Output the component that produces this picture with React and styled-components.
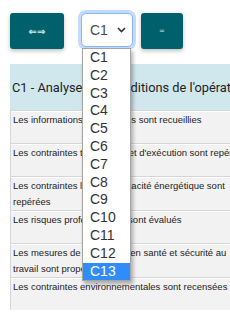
import React from "react";
import styled, { createGlobalStyle } from "styled-components";

const GlobalStyle = createGlobalStyle`
  html, body {
    margin: 0;
    padding: 0;
    background: #fff;
    overflow: hidden;
  }
  body {
    font-family: "Liberation Sans", Arial, sans-serif;
  }
`;

const Page = styled.div`
  position: relative;
  padding: 13px 0 0 10px;
  width: 400px;
`;

const Toolbar = styled.div`
  display: flex;
  align-items: flex-start;
  margin-bottom: 15px;
`;

const ToolButton = styled.button`
  width: ${(p) => p.$w}px;
  height: 36px;
  margin-right: ${(p) => p.$mr || 0}px;
  border: 0;
  border-radius: 3px;
  background: #00606c;
  color: ${(p) => p.$color || "#d4ecf0"};
  font-family: "DejaVu Sans", sans-serif;
  font-size: ${(p) => p.$fs}px;
  font-weight: bold;
  box-shadow: 0 2px 4px rgba(0, 0, 0, 0.25);
  display: flex;
  align-items: center;
  justify-content: center;
  padding: 0;
`;

const SelectWrap = styled.div`
  position: relative;
  margin-right: 8px;
`;

const SelectBox = styled.div`
  height: 32px;
  width: 36px;
  border: 1px solid #86b7fe;
  border-radius: 5px;
  box-shadow: 0 0 0 3px #c2dbfe;
  display: flex;
  align-items: center;
  justify-content: space-between;
  padding: 0 6px 0 8px;
  box-sizing: content-box;
  color: #4a4a4a;
  font-family: "Liberation Sans", Arial, sans-serif;
  font-size: 14px;
  background: #fff;
`;

const Popup = styled.ul`
  position: absolute;
  left: 1px;
  top: 35px;
  width: 47px;
  margin: 0;
  padding: 0;
  list-style: none;
  background: #fff;
  border: 1px solid #a5a5a5;
  box-shadow: 2px 3px 4px rgba(0, 0, 0, 0.3);
  z-index: 10;
`;

const Option = styled.li`
  height: 17.8px;
  line-height: 17.8px;
  padding-left: 7px;
  font-family: "Liberation Sans", Arial, sans-serif;
  font-size: 14px;
  color: ${(p) => (p.$active ? "#fff" : "#333")};
  background: ${(p) => (p.$active ? "#2f8cf8" : "transparent")};
`;

const Table = styled.table`
  border-collapse: separate;
  border-spacing: 0;
  width: 244px;
`;

const HeadCell = styled.th`
  height: 46px;
  padding: 0 2px;
  background: #d1e7ee;
  text-align: left;
  vertical-align: middle;
  font-family: Roboto, "Liberation Sans", sans-serif;
  font-weight: normal;
  font-size: 12.8px;
  color: #222;
  white-space: nowrap;
`;

const Cell = styled.td`
  height: 33px;
  padding: 1px 2px 0;
  background: #f2f2f2;
  border-left: 1px solid #d6d6d6;
  border-top: 1px solid #d6d6d6;
  box-shadow: inset 0 1px 0 #fff;
  vertical-align: top;
  font-family: "Liberation Sans", Arial, sans-serif;
  font-size: 9.5px;
  line-height: 16px;
  color: #1c1c1c;
  box-sizing: border-box;
`;

const Row = styled.tr``;

const options = Array.from({ length: 13 }, (_, i) => `C${i + 1}`);

const rows = [
  "Les informations nécessaires sont recueillies",
  "Les contraintes techniques et d'exécution sont repérées",
  "Les contraintes liées à l'efficacité énergétique sont repérées",
  "Les risques professionnels sont évalués",
  "Les mesures de prévention en santé et sécurité au travail sont proposées",
  "Les contraintes environnementales sont recensées",
];

const Chevron = () => (
  <svg width="9" height="6" viewBox="0 0 9 6">
    <path d="M1 1 L4.5 4.5 L8 1" fill="none" stroke="#333" strokeWidth="1.6" />
  </svg>
);

export default function App() {
  return (
    <>
      <GlobalStyle />
      <Page>
        <Toolbar>
          <ToolButton $w={54} $mr={17} $fs={10}>
            ⇐⇒
          </ToolButton>
          <SelectWrap>
            <SelectBox>
              <span>C1</span>
              <Chevron />
            </SelectBox>
            <Popup>
              {options.map((o) => (
                <Option key={o} $active={o === "C13"}>
                  {o}
                </Option>
              ))}
            </Popup>
          </SelectWrap>
          <ToolButton $w={42} $fs={7} $color="#8fc4cc">
            =
          </ToolButton>
        </Toolbar>
        <Table>
          <thead>
            <tr>
              <HeadCell>C1 - Analyser les conditions de l'opération</HeadCell>
            </tr>
          </thead>
          <tbody>
            {rows.map((r) => (
              <Row key={r}>
                <Cell>{r}</Cell>
              </Row>
            ))}
          </tbody>
        </Table>
      </Page>
    </>
  );
}
